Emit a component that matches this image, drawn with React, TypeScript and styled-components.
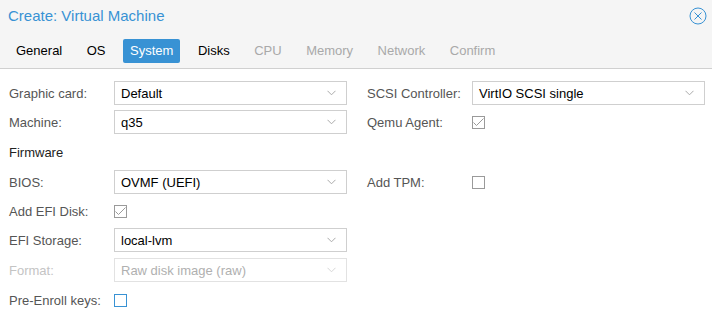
import * as React from 'react';
import styled, { createGlobalStyle } from 'styled-components';

const GlobalStyle = createGlobalStyle`
	html, body {
		margin: 0;
		padding: 0;
		background: #ffffff;
	}
	body {
		font-family: 'Liberation Sans', Arial, sans-serif;
		font-size: 13px;
	}
`;

const Window = styled.div`
	width: 712px;
	height: 324px;
	background: #fff;
	overflow: hidden;
`;

const Header = styled.div`
	background: #f5f5f5;
	border-bottom: 1px solid #d0d0d0;
	height: 69px;
	box-sizing: border-box;
`;

const TitleBar = styled.div`
	display: flex;
	align-items: center;
	justify-content: space-between;
	height: 30px;
	padding: 0 5px 0 8px;
	h1 {
		margin: 0;
		font-size: 15px;
		font-weight: 400;
		color: #3892d4;
	}
`;

const CloseButton = styled.div`
	display: flex;
	width: 18px;
	height: 18px;
	margin-top: 1px;
`;

const Tabs = styled.div`
	display: flex;
	gap: 10.5px;
	padding: 9px 0 0 9px;
`;

const Tab = styled.div<{ $active?: boolean; $disabled?: boolean }>`
	height: 24px;
	line-height: 24px;
	padding: 0 7px;
	border-radius: 2px;
	background: ${(p) => (p.$active ? '#3892d4' : 'transparent')};
	color: ${(p) => (p.$active ? '#fff' : p.$disabled ? '#a9a9a9' : '#000')};
`;

const Form = styled.div`
	display: grid;
	grid-template-columns: 338px 338px;
	column-gap: 20px;
	row-gap: 5px;
	padding: 12px 7px 0 9px;
`;

const Field = styled.div<{ $disabled?: boolean; $shift?: number }>`
	display: flex;
	align-items: center;
	height: 24px;
	margin-top: ${(p) => p.$shift || 0}px;
	label {
		width: 105px;
		flex: none;
		color: ${(p) => (p.$disabled ? '#c4c4c4' : '#555')};
	}
`;

const Section = styled.div`
	grid-column: 1 / span 2;
	height: 26px;
	box-sizing: border-box;
	padding-top: 4px;
	line-height: 20px;
	color: #222;
`;

const Combo = styled.div<{ $disabled?: boolean }>`
	flex: 1;
	display: flex;
	align-items: center;
	justify-content: space-between;
	height: 24px;
	box-sizing: border-box;
	border: 1px solid ${(p) => (p.$disabled ? '#e2e2e2' : '#cfcfcf')};
	padding: 0 10px 0 6px;
	color: ${(p) => (p.$disabled ? '#b0b0b0' : '#000')};
	background: #fff;
`;

const Check = styled.div<{ $focus?: boolean }>`
	width: 13px;
	height: 13px;
	box-sizing: border-box;
	border: 1px solid ${(p) => (p.$focus ? '#3892d4' : '#9a9a9a')};
	display: flex;
	align-items: center;
	justify-content: center;
`;

const Chevron = ({ faded }: { faded?: boolean }) => (
	<svg width="9" height="6" viewBox="0 0 9 6">
		<path d="M0.5 0.8 L4.5 4.8 L8.5 0.8" fill="none" stroke={faded ? '#d6d6d6' : '#aaa'} strokeWidth="1" />
	</svg>
);

const ComboBox = ({ value, disabled }: { value: string; disabled?: boolean }) => (
	<Combo $disabled={disabled}>
		<span>{value}</span>
		<Chevron faded={disabled} />
	</Combo>
);

const CheckBox = ({ checked, focus }: { checked?: boolean; focus?: boolean }) => (
	<Check $focus={focus}>
		{checked && (
			<svg width="11" height="9" viewBox="0 0 11 9">
				<path d="M0.5 4.5 L3.5 7.5 L10.5 0.5" fill="none" stroke="#9a9a9a" strokeWidth="1" />
			</svg>
		)}
	</Check>
);

const tabs = [
	{ name: 'General' },
	{ name: 'OS' },
	{ name: 'System', active: true },
	{ name: 'Disks' },
	{ name: 'CPU', disabled: true },
	{ name: 'Memory', disabled: true },
	{ name: 'Network', disabled: true },
	{ name: 'Confirm', disabled: true },
];

export default function App() {
	return (
		<Window>
			<GlobalStyle />
			<Header>
				<TitleBar>
					<h1>Create: Virtual Machine</h1>
					<CloseButton>
						<svg width="18" height="18" viewBox="0 0 18 18">
							<circle cx="9" cy="9" r="8" fill="none" stroke="#3892d4" strokeWidth="1" />
							<path d="M5.5 5.5 L12.5 12.5 M12.5 5.5 L5.5 12.5" stroke="#3892d4" strokeWidth="1" />
						</svg>
					</CloseButton>
				</TitleBar>
				<Tabs>
					{tabs.map((t) => (
						<Tab key={t.name} $active={t.active} $disabled={t.disabled}>
							{t.name}
						</Tab>
					))}
				</Tabs>
			</Header>
			<Form>
				<Field>
					<label>Graphic card:</label>
					<ComboBox value="Default" />
				</Field>
				<Field>
					<label>SCSI Controller:</label>
					<ComboBox value="VirtIO SCSI single" />
				</Field>
				<Field>
					<label>Machine:</label>
					<ComboBox value="q35" />
				</Field>
				<Field>
					<label>Qemu Agent:</label>
					<CheckBox checked />
				</Field>
				<Section>Firmware</Section>
				<Field>
					<label>BIOS:</label>
					<ComboBox value="OVMF (UEFI)" />
				</Field>
				<Field>
					<label>Add TPM:</label>
					<CheckBox />
				</Field>
				<Field>
					<label>Add EFI Disk:</label>
					<CheckBox checked />
				</Field>
				<div />
				<Field>
					<label>EFI Storage:</label>
					<ComboBox value="local-lvm" />
				</Field>
				<div />
				<Field $disabled $shift={1}>
					<label>Format:</label>
					<ComboBox value="Raw disk image (raw)" disabled />
				</Field>
				<div />
				<Field $shift={1}>
					<label>Pre-Enroll keys:</label>
					<CheckBox focus />
				</Field>
			</Form>
		</Window>
	);
}
